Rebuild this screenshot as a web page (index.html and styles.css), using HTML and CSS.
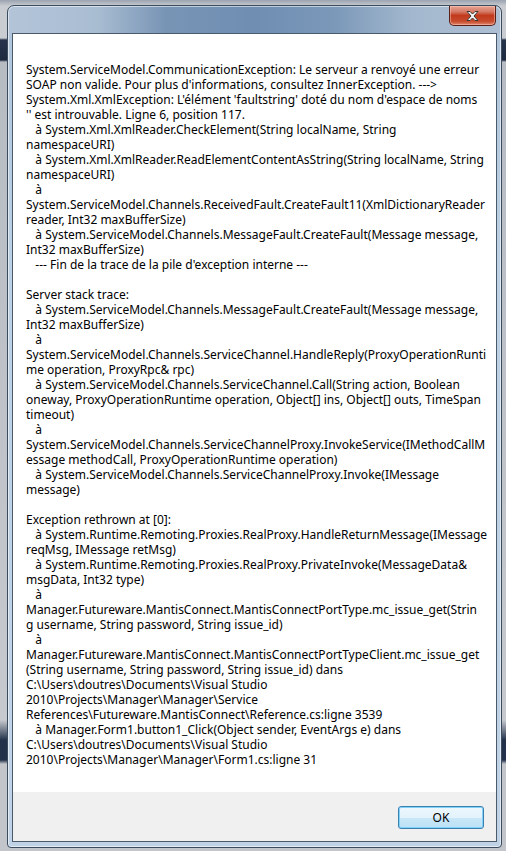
FILE: index.html
```html
<!DOCTYPE html>
<html lang="fr">
<head>
    <meta charset="UTF-8">
    <meta name="viewport" content="width=device-width, initial-scale=1.0">
    <title>Erreur</title>
    <link rel="stylesheet" href="styles.css">
</head>
<body>
    <div class="window">
        <button class="close" title="Fermer">
            <svg width="17" height="12" viewBox="0 0 17 12">
                <path d="M3 1.5 L6 1.5 L8.5 4 L11 1.5 L14 1.5 L10 6 L14 10.5 L11 10.5 L8.5 8 L6 10.5 L3 10.5 L7 6 Z" fill="#f4f4f4" stroke="#3a3a3a" stroke-width="1" stroke-linejoin="round"/>
            </svg>
        </button>

        <div class="client">
            <div class="message">
<div class="text">System.ServiceModel.CommunicationException: Le serveur a renvoyé une erreur
SOAP non valide. Pour plus d'informations, consultez InnerException. ---&gt;
System.Xml.XmlException: L'élément 'faultstring' doté du nom d'espace de noms
'' est introuvable. Ligne 6, position 117.
   à System.Xml.XmlReader.CheckElement(String localName, String
namespaceURI)
   à System.Xml.XmlReader.ReadElementContentAsString(String localName, String
namespaceURI)
   à
System.ServiceModel.Channels.ReceivedFault.CreateFault11(XmlDictionaryReader
reader, Int32 maxBufferSize)
   à System.ServiceModel.Channels.MessageFault.CreateFault(Message message,
Int32 maxBufferSize)
   --- Fin de la trace de la pile d'exception interne ---

Server stack trace:
   à System.ServiceModel.Channels.MessageFault.CreateFault(Message message,
Int32 maxBufferSize)
   à
System.ServiceModel.Channels.ServiceChannel.HandleReply(ProxyOperationRunti
me operation, ProxyRpc&amp; rpc)
   à System.ServiceModel.Channels.ServiceChannel.Call(String action, Boolean
oneway, ProxyOperationRuntime operation, Object[] ins, Object[] outs, TimeSpan
timeout)
   à
System.ServiceModel.Channels.ServiceChannelProxy.InvokeService(IMethodCallM
essage methodCall, ProxyOperationRuntime operation)
   à System.ServiceModel.Channels.ServiceChannelProxy.Invoke(IMessage
message)

Exception rethrown at [0]:
   à System.Runtime.Remoting.Proxies.RealProxy.HandleReturnMessage(IMessage
reqMsg, IMessage retMsg)
   à System.Runtime.Remoting.Proxies.RealProxy.PrivateInvoke(MessageData&amp;
msgData, Int32 type)
   à
Manager.Futureware.MantisConnect.MantisConnectPortType.mc_issue_get(Strin
g username, String password, String issue_id)
   à
Manager.Futureware.MantisConnect.MantisConnectPortTypeClient.mc_issue_get
(String username, String password, String issue_id) dans
C:\Users\doutres\Documents\Visual Studio
2010\Projects\Manager\Manager\Service
References\Futureware.MantisConnect\Reference.cs:ligne 3539
   à Manager.Form1.button1_Click(Object sender, EventArgs e) dans
C:\Users\doutres\Documents\Visual Studio
2010\Projects\Manager\Manager\Form1.cs:ligne 31</div>
            </div>
            <div class="footer">
                <button class="ok">OK</button>
            </div>
        </div>
    </div>
</body>
</html>
```

FILE: styles.css
```css
html, body {
    margin: 0;
    height: 100%;
}
body {
    padding: 5px 4px 3px 7px;
    box-sizing: border-box;
    background: linear-gradient(to bottom,
        #9aa3b0 0, #c9ccd1 6px, #c9ccd1 38px, #26344b 40px, #1d2a40 60px,
        #b7bcc3 62px, #c6c9ce 720px, #23324a 740px, #23324a 760px, #c2c5ca 764px);
    font-family: "Noto Sans", "Open Sans", sans-serif;
}
.window {
    position: relative;
    width: 495px;
    height: 843px;
    box-sizing: border-box;
    padding: 27px 4px 5px 4px;
    border: 1px solid #3b4c5e;
    border-radius: 7px 7px 4px 4px;
    background:
        linear-gradient(to right, rgba(255,255,255,0) 0, rgba(255,255,255,0) 60%, rgba(255,255,255,0)),
        linear-gradient(to right, #b3c4d8 0, #a9bdd2 18%, #7894b5 32%, #6f8eb2 50%, #7b98b9 66%, #a3b8ce 82%, #aebfd3 100%) top / 100% 28px no-repeat,
        linear-gradient(to bottom, #afc3d9 0, #bcd0e4 30%, #bfd2e6 100%);
    box-shadow: inset 0 0 0 1px rgba(255,255,255,0.55);
}
.close {
    position: absolute;
    top: 0;
    right: 5px;
    width: 47px;
    height: 20px;
    padding: 0;
    border: 1px solid #5a2018;
    border-top: none;
    border-radius: 0 0 5px 5px;
    background: linear-gradient(to bottom, #e8a493 0, #d47a66 30%, #c23a1e 50%, #c74a2c 80%, #e0876c 100%);
    box-shadow: inset 0 0 0 1px rgba(255,210,200,0.45);
    display: flex;
    align-items: center;
    justify-content: center;
}
.client {
    height: 100%;
    box-sizing: border-box;
    border: 1px solid #4b5a6a;
    display: flex;
    flex-direction: column;
    background: #f0f0f0;
}
.message {
    flex: 1;
    background: #ffffff;
    padding: 28px 13px 0 13px;
}
.text {
    white-space: pre;
    font-size: 12px;
    line-height: 15px;
    color: #000;
}
.footer {
    height: 49px;
    flex: none;
    display: flex;
    align-items: center;
    justify-content: flex-end;
    padding-right: 12px;
}
.ok {
    width: 86px;
    height: 23px;
    margin-top: 2px;
    border: 1px solid #3c7fb1;
    border-radius: 3px;
    background: linear-gradient(to bottom, #edf7fd 0, #e3f2fb 50%, #c9e7f8 51%, #bce1f6 100%);
    box-shadow: inset 0 0 0 1px #7fd3f8;
    font-family: "Noto Sans", "Open Sans", sans-serif;
    font-size: 12px;
    color: #000;
    padding: 0;
}
```
